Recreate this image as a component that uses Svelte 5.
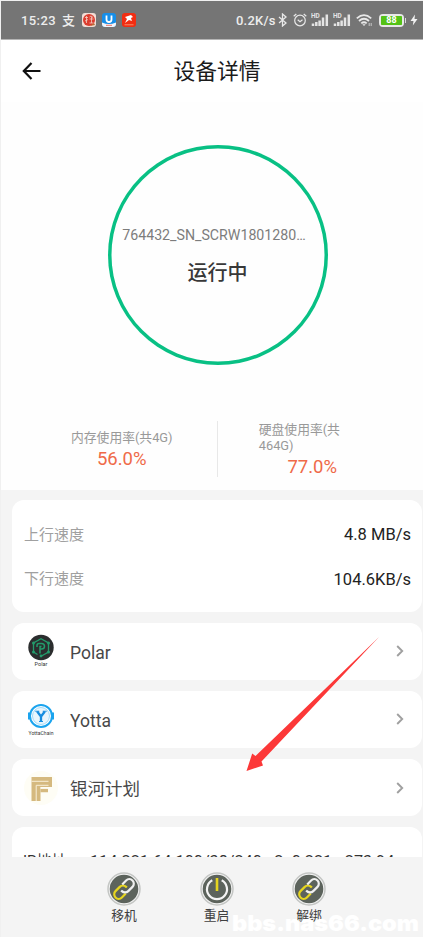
<!-- Device detail screen: status, usage, traffic, plans and device actions -->
<script>
  const device = { name: '764432_SN_SCRW1801280…', status: '运行中' };

  const speeds = [
    { label: '上行速度', value: '4.8 MB/s' },
    { label: '下行速度', value: '104.6KB/s' },
  ];

  const plans = [
    { key: 'polar', name: 'Polar' },
    { key: 'yotta', name: 'Yotta' },
    { key: 'galaxy', name: '银河计划' },
  ];

  const actions = [
    { icon: 'link', label: '移机' },
    { icon: 'power', label: '重启' },
    { icon: 'link', label: '解绑' },
  ];
</script>

{#snippet signal()}
  <svg class="signal" width="18" height="14" viewBox="0 0 18 14">
    <text x="0" y="5.2" font-size="6.5" font-weight="700" fill="#e4e4e4">HD</text>
    <path d="M2 13v-2.500M5.300 13V9M8.600 13V7.500M12 13V4.500M15.800 13V1.500" stroke="#e4e4e4" stroke-width="2.500" />
  </svg>
{/snippet}

<div class="screen">
  <div class="statusbar">
    <span class="clock">15:23</span>
    <span class="pay">支</span>
    <svg class="app" width="14" height="14" viewBox="0 0 14 14">
      <rect width="14" height="14" rx="3" fill="#f3dcd5" />
      <circle cx="7" cy="7" r="6" fill="#dc3c2e" />
      <path d="M3 4.500h3M4.500 3v7M3 8l3-1.500M7.500 4l1.500-1 2 1.500M7.500 6h4M9.500 4v6M7.500 10h4" stroke="#f6cfc4" stroke-width=".8" fill="none" />
      <path d="M8 13l4-3 1 2z" fill="#b66c35" />
    </svg>
    <svg class="app" width="14" height="14" viewBox="0 0 14 14">
      <rect width="14" height="14" rx="3" fill="#168ee8" />
      <path d="M0 9.500q7 3 14 0V11q0 3-3 3H3q-3 0-3-3z" fill="#f4f6fa" />
      <path d="M4.500 2.500v4q0 2.500 2.500 2.500t2.500-2.500v-4" fill="none" stroke="#fff" stroke-width="1.800" />
      <path d="M4 12.300h6" stroke="#e5746b" />
    </svg>
    <svg class="app" width="14" height="14" viewBox="0 0 14 14">
      <rect width="14" height="14" rx="3" fill="#f22d12" />
      <path d="M3 4l6-2 2 2-2 1 1 3-3-1-4 3 2-4z" fill="#fff" />
      <path d="M2.500 11.800h9" stroke="#f98d68" />
    </svg>
    <span class="rate">0.2K/s</span>
    <svg width="9" height="14" viewBox="0 0 9 14">
      <path d="M1 4l7 6-3.500 3V1L8 4l-7 6" fill="none" stroke="#e8e8e8" stroke-width="1.300" />
    </svg>
    <svg class="alarm" width="14" height="14" viewBox="0 0 14 14">
      <circle cx="7" cy="7.500" r="5.300" fill="none" stroke="#e8e8e8" stroke-width="1.200" />
      <path d="M4.700 6.700L7 8.700l2.500-2M.7 3.300L3.300 1M13.300 3.300L10.700 1" fill="none" stroke="#e8e8e8" stroke-width="1.200" />
    </svg>
    {@render signal()}
    {@render signal()}
    <svg class="wifi" width="17" height="14" viewBox="0 0 17 14">
      <g fill="none" stroke="#e8e8e8" stroke-width="1.800">
        <path d="M.8 5.300q7.200-6.400 14.400 0M3 8q5-4.400 10 0M5.300 10.400q2.700-2.200 5.400 0" />
      </g>
      <path d="M6.300 11.200h3.400L8 13z" fill="#e8e8e8" />
      <path d="M13.200 10v3M15.200 10v3" stroke="#c8c8c8" />
    </svg>
    <span class="battery"><span>88</span></span>
    <span class="battery-tip"></span>
    <svg class="bolt" width="8" height="12" viewBox="0 0 8 12">
      <path d="M5 .5L.5 7H3.500L2.800 11.500 7.500 5H4.500z" fill="#f2f2f2" />
    </svg>
  </div>

  <header>
    <svg class="back" width="20" height="18" viewBox="0 0 20 18">
      <path d="M9.500 1L1.800 9l7.700 8M2 9h16.500" fill="none" stroke="#111" stroke-width="2.200" />
    </svg>
    <h1>设备详情</h1>
  </header>

  <section class="overview">
    <div class="ring">
      <div class="device-name">{device.name}</div>
      <div class="device-status">{device.status}</div>
    </div>
    <div class="usage">
      <div class="usage-item">
        <span class="usage-label">内存使用率(共4G)</span>
        <span class="usage-value">56.0%</span>
      </div>
      <div class="divider"></div>
      <div class="usage-item">
        <span class="usage-label">硬盘使用率(共464G)</span>
        <span class="usage-value">77.0%</span>
      </div>
    </div>
  </section>

  <main>
    <div class="card speeds">
      {#each speeds as speed}
        <div class="speed-row">
          <span class="speed-label">{speed.label}</span>
          <span class="speed-value">{speed.value}</span>
        </div>
      {/each}
    </div>

    {#each plans as plan}
      <div class="card plan">
        <svg class="plan-icon" width="36" height="36" viewBox="0 0 36 36">
          {#if plan.key === 'polar'}
            <circle cx="18" cy="14.500" r="12.700" fill="#2b2d2e" />
            <g fill="none" stroke="#239b6b" stroke-width="1.300">
              <path d="M14.500 21.500L10.500 19V10L18 5.700l7.500 4.300v9L18 23.300" />
              <path d="M14 14v-1.500q0-2 2-2h2.500q3 0 3 2.800t-3 2.800H17v4.500M17 16v-2.500h1.500" stroke-width="1.500" />
            </g>
            <g fill="#239b6b">
              <circle cx="10.500" cy="10" r="1.500" /><circle cx="25.500" cy="10" r="1.500" />
              <circle cx="10.500" cy="19" r="1.500" /><circle cx="25.500" cy="19" r="1.500" />
              <circle cx="18" cy="23" r="1.400" />
            </g>
            <text x="18" y="33" font-size="5.500" text-anchor="middle" fill="#333">Polar</text>
          {:else if plan.key === 'yotta'}
            <path d="M6 11.500v7M30 11.500v7" stroke="#1ba4ee" stroke-width="2" />
            <circle cx="18" cy="15" r="11" fill="#fff" stroke="#1ba4ee" stroke-width="2" />
            <circle cx="18" cy="15" r="8.500" fill="#e9f6fd" stroke="#8ed0f5" stroke-width=".8" />
            <path d="M14.200 10.500L18 15.500l3.800-5M18 15v5.500" fill="none" stroke="#168de0" stroke-width="2.300" />
            <path d="M12.300 10.300h4M19.700 10.300h4M16 20.500h4" stroke="#168de0" stroke-width="1.100" />
            <text x="18" y="33.500" font-size="5" text-anchor="middle" textLength="25" fill="#333">YottaChain</text>
          {:else}
            <circle cx="18" cy="18" r="17" fill="#fefdf5" />
            <path d="M8.500 7H29v10H17.500v14h-9z" fill="#d5b97f" />
            <path d="M8.500 11.300h17M13.200 31V15.300H25.500" fill="none" stroke="#f8efd9" stroke-width="1" />
            <path d="M17.500 20.500h7.500" stroke="#d5b97f" stroke-width="3.500" />
            <path d="M17.500 18h12" stroke="#fefdf5" stroke-width="1.200" />
          {/if}
        </svg>
        <span class="plan-name" class:cjk={plan.key === 'galaxy'}>{plan.name}</span>
        <svg width="8" height="12" viewBox="0 0 8 12">
          <path d="M1.200 1l5 5-5 5" fill="none" stroke="#a0a0a0" stroke-width="1.900" />
        </svg>
      </div>
    {/each}

    <div class="card address">
      <span class="ip-label">IP地址</span>
      <span class="ip-value">114.221.64.100/38/240e:2c0:221a:273:94</span>
    </div>
  </main>

  <footer>
    {#each actions as action}
      <div class="action">
        <svg width="34" height="34" viewBox="0 0 34 34">
          <circle cx="17" cy="17" r="16" fill="#f4f4f4" stroke="#c4c6c4" stroke-width="1.500" />
          <circle cx="17" cy="17" r="14.300" fill="#5c635c" />
          {#if action.icon === 'link'}
            <g transform="translate(17 17) rotate(-45)" fill="none" stroke-width="2.200">
              <path d="M-2 4.500H-7.500a4.500 4.500 0 0 1 0-9H-1.500a4.500 4.500 0 0 1 4.500 4.500v1" stroke="#e6d51f" />
              <path d="M2-4.500H7.500a4.500 4.500 0 0 1 0 9H1.500a4.500 4.500 0 0 1-4.500-4.500v-1" stroke="#f0f0f0" />
            </g>
          {:else}
            <path d="M12.300 8.300a10 10 0 1 0 9.400 0" fill="none" stroke="#f4f4f4" stroke-width="2.200" />
            <path d="M17 6v13" stroke="#e6d51f" stroke-width="2.600" />
          {/if}
        </svg>
        <span>{action.label}</span>
      </div>
    {/each}
  </footer>

  <svg class="pointer" width="134" height="136" viewBox="0 0 134 136">
    <path d="M133 0L9.500 119 6.200 116.500.500 134 17 128.500 15.500 124.500z" fill="#fc3838" />
  </svg>
  <svg class="watermark" width="190" height="24" viewBox="0 0 190 24">
    <text x="1" y="18" textLength="187" lengthAdjust="spacingAndGlyphs">bbs.nas66.com</text>
  </svg>
</div>

<style>
  :global(body) { margin: 0; background: #f4f4f4; }

  .screen {
    position: relative;
    box-sizing: border-box;
    width: 423px;
    height: 937px;
    padding: 1px 0 0 1px;
    overflow: hidden;
    display: flex;
    flex-direction: column;
    background: #f0f0f0;
    font-family: Roboto, "Noto Sans CJK SC", sans-serif;
  }
  svg { display: block; flex-shrink: 0; }

  /* ── Status bar ── */
  .statusbar {
    display: flex;
    align-items: center;
    box-sizing: border-box;
    height: 39px;
    flex-shrink: 0;
    padding-left: 20px;
    background: #757575;
    border-bottom: 1px solid #b5b5b5;
    color: #ededed;
    font-size: 13px;
    font-weight: 500;
  }
  .clock { width: 41px; letter-spacing: 0.4px; }
  .pay { width: 20px; padding-top: 1px; font-size: 13px; font-weight: 500; line-height: 20px; }
  .app { margin-right: 6px; }
  .rate { margin-left: 94px; width: 42px; letter-spacing: 0.2px; white-space: nowrap; }
  .alarm { margin: 0 4px 0 6px; }
  .signal { margin-right: 4px; }
  .wifi { margin-left: 1px; }
  .battery {
    box-sizing: border-box;
    width: 25px;
    height: 13px;
    margin-left: 6px;
    border: 2px solid #e8e8e8;
    border-radius: 4px;
  }
  .battery span {
    display: block;
    background: #54c216;
    border-radius: 1px;
    color: #fff;
    font-size: 9px;
    font-weight: 700;
    line-height: 9px;
    text-align: center;
  }
  .battery-tip { width: 1px; height: 5px; margin-left: 1px; background: #d8d8d8; }
  .bolt { margin-left: 4px; }

  /* ── Title ── */
  header {
    display: grid;
    grid-template-columns: 42px 1fr 32px;
    align-items: center;
    height: 62px;
    flex-shrink: 0;
    background: #fff;
  }
  .back { margin-left: 21px; }
  h1 {
    margin: 0;
    padding-top: 2px;
    color: #1b1b1b;
    font-size: 21.800px;
    font-weight: 400;
    line-height: 30px;
    text-align: center;
  }

  /* ── Overview ── */
  .overview {
    box-sizing: border-box;
    height: 388px;
    flex-shrink: 0;
    padding-top: 43px;
    background: #fefefe;
  }
  .ring {
    box-sizing: border-box;
    width: 220px;
    height: 220px;
    margin-left: 106.500px;
    padding-top: 80px;
    border-radius: 50%;
    box-shadow: inset 0 0 0 3.500px #08c084;
    text-align: center;
  }
  .device-name { padding-right: 7px; color: #7c7c7c; font-size: 14.200px; line-height: 20px; white-space: nowrap; }
  .device-status { margin-top: 13px; color: #383838; font-size: 20px; font-weight: 500; line-height: 30px; }
  .usage {
    display: flex;
    align-items: center;
    height: 56px;
    margin-top: 56px;
    padding: 0 16px 0 26px;
  }
  .usage-item {
    flex: 1;
    display: flex;
    flex-direction: column;
    align-items: center;
    padding-top: 3px;
  }
  .usage-label { max-width: 107px; color: #999; font-size: 12.800px; line-height: 16px; }
  .usage-value { margin-top: 1px; color: #ef6a48; font-size: 18.500px; line-height: 24px; }
  .divider { width: 1px; height: 56px; background: #e8e8e8; }

  /* ── Cards ── */
  main {
    display: flex;
    flex-direction: column;
    gap: 11px;
    box-sizing: border-box;
    height: 367px;
    flex-shrink: 0;
    padding: 10px 1px 0 11px;
    overflow: hidden;
    background: #f4f4f4;
  }
  .card { box-sizing: border-box; flex-shrink: 0; border-radius: 12px; background: #fff; }
  .speeds { height: 111.500px; padding: 12px 11px 0 12px; }
  .speed-row { display: flex; justify-content: space-between; align-items: center; height: 44.500px; }
  .speed-label { padding-bottom: 2px; color: #a0a0a0; font-size: 15px; }
  .speed-value { padding-top: 1px; color: #222; font-size: 16.500px; }
  .plan { display: flex; align-items: center; height: 57.300px; padding: 0 18px 0 11px; }
  .plan-name { flex: 1; margin-left: 11px; padding-top: 4px; color: #484848; font-size: 17.500px; }
  .plan-name.cjk { padding-top: 0; }
  .address {
    display: flex;
    height: 80px;
    padding: 23px 11px 0;
    color: #333;
    font-size: 15px;
    line-height: 22px;
    white-space: nowrap;
  }
  .ip-label { width: 67px; }
  .ip-value { padding-top: 1px; font-size: 16.200px; }

  /* ── Bottom actions ── */
  footer {
    display: flex;
    justify-content: center;
    gap: 58.500px;
    box-sizing: border-box;
    height: 80px;
    flex-shrink: 0;
    padding: 15px 0 0 9px;
    background: #f4f4f4;
  }
  .action {
    display: flex;
    flex-direction: column;
    align-items: center;
    width: 34px;
    color: #404040;
    font-size: 12.800px;
    line-height: 20px;
  }

  /* ── Overlays ── */
  .pointer { position: absolute; left: 246px; top: 637px; }
  .watermark { position: absolute; left: 231px; top: 913px; }
  .watermark text { fill: #fff; font-family: Inter, sans-serif; font-size: 21.500px; font-weight: 900; }
</style>
